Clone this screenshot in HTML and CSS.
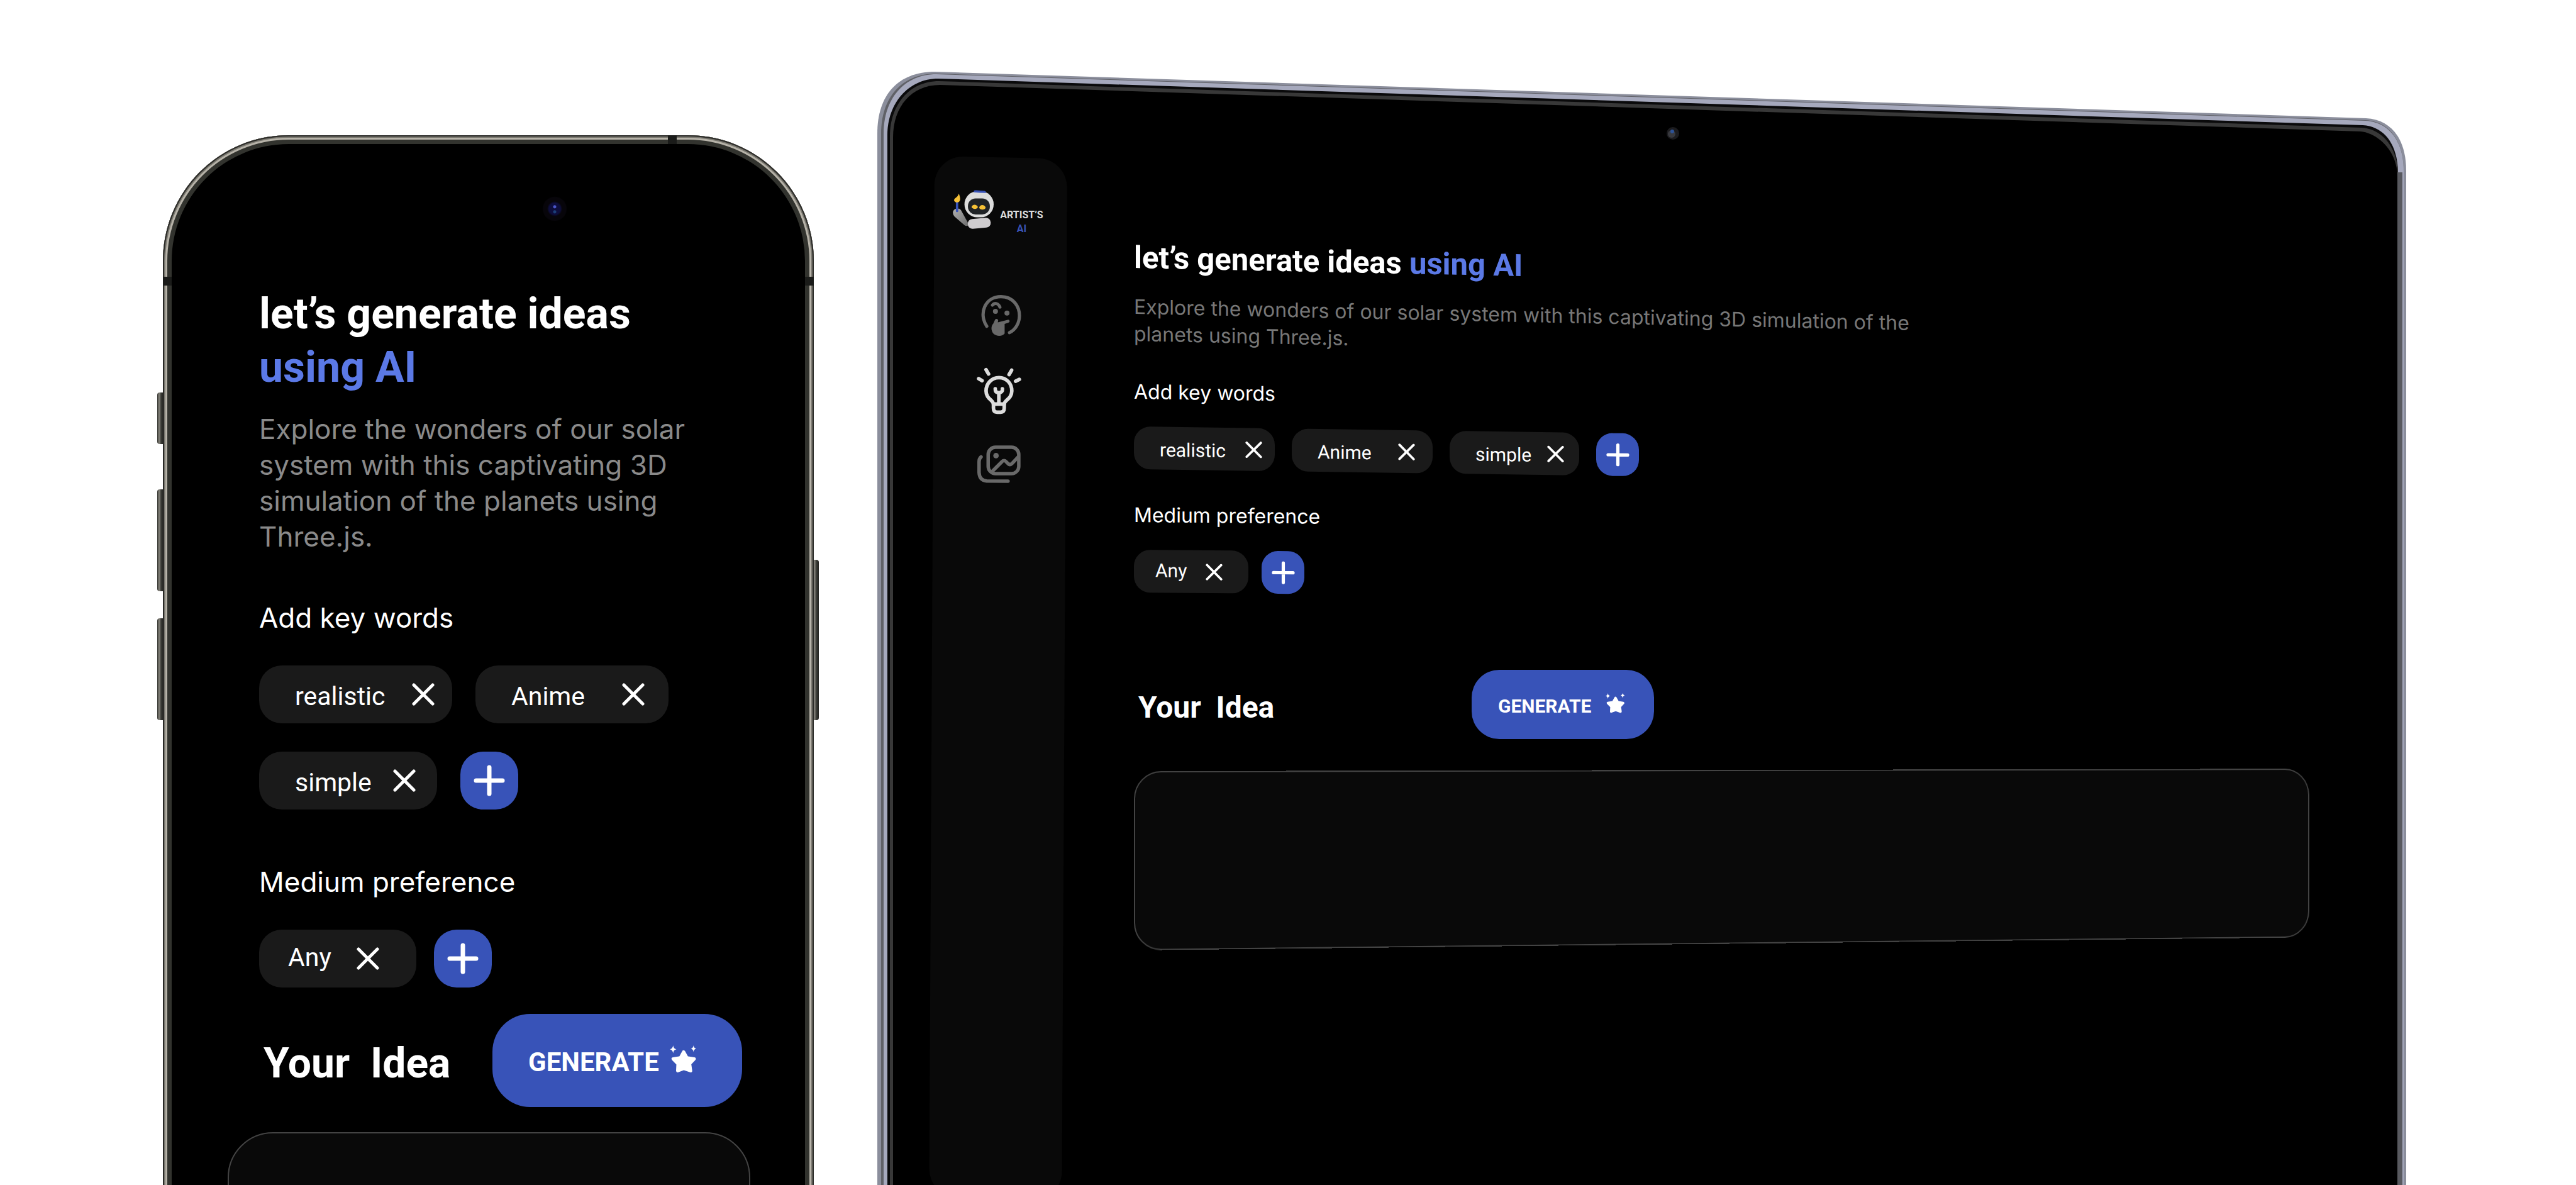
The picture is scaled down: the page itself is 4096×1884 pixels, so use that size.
FILE: index.html
```html
<!DOCTYPE html>
<html lang="en">
<head>
<meta charset="utf-8">
<meta name="viewport" content="width=device-width, initial-scale=1">
<title>Artist's AI – Generate ideas</title>
<link rel="stylesheet" href="styles.css">
</head>
<body>
<svg class="sprite" aria-hidden="true">
  <symbol id="cross" viewBox="0 0 36 36"><path d="M3 3 33 33M33 3 3 33" fill="none" stroke="#fff" stroke-width="5" stroke-linecap="round"/></symbol>
  <symbol id="plus" viewBox="0 0 50 50"><path d="M25 4V46M4 25H46" fill="none" stroke="#fff" stroke-width="7" stroke-linecap="round"/></symbol>
  <symbol id="stars" viewBox="0 0 42 42">
    <path d="M22 10 27 19 38 20.500 31 28 32.500 38.500 22.500 35 13 38.500 13.500 28 6 20.500 17 19Z" fill="#fff" stroke="#fff" stroke-width="5" stroke-linejoin="round"/>
    <path d="M6 0Q6.500 5 11 6Q6.500 7 6 12Q5.500 7 1 6Q5.500 5 6 0ZM37 0Q37.500 4 41 5Q37.500 6 37 10Q36.500 6 33 5Q36.500 4 37 0Z" fill="#fff"/>
  </symbol>
</svg>

<div class="stage">
  <section class="device phone" aria-label="Phone">
    <span class="key key-action"></span>
    <span class="key key-up"></span>
    <span class="key key-down"></span>
    <span class="key key-power"></span>
    <div class="phone-body">
      <span class="antenna antenna-left"></span>
      <span class="antenna antenna-right"></span>
      <span class="antenna antenna-top"></span>
      <span class="phone-camera"></span>
      <main class="content">
        <h1 class="title">let’s generate ideas <span class="accent">using AI</span></h1>
        <p class="lead">Explore the wonders of our solar system with this captivating 3D simulation of the planets using Three.js.</p>
        <h2 class="label label-words">Add key words</h2>
        <div class="chips chips-words">
          <span class="chip"><span class="chip-text">realistic</span><button class="remove" type="button" aria-label="Remove realistic"><svg><use href="#cross"/></svg></button></span>
          <span class="chip chip-anime"><span class="chip-text">Anime</span><button class="remove" type="button" aria-label="Remove Anime"><svg><use href="#cross"/></svg></button></span>
          <span class="chip chip-simple"><span class="chip-text">simple</span><button class="remove" type="button" aria-label="Remove simple"><svg><use href="#cross"/></svg></button></span>
          <button class="add" type="button" aria-label="Add key word"><svg><use href="#plus"/></svg></button>
        </div>
        <h2 class="label label-medium">Medium preference</h2>
        <div class="chips chips-medium">
          <span class="chip chip-any"><span class="chip-text">Any</span><button class="remove" type="button" aria-label="Remove Any"><svg><use href="#cross"/></svg></button></span>
          <button class="add" type="button" aria-label="Add medium"><svg><use href="#plus"/></svg></button>
        </div>
        <div class="idea-row">
          <label class="idea-label" for="phone-idea">Your&nbsp; Idea</label>
          <button class="generate" type="button">GENERATE<svg><use href="#stars"/></svg></button>
        </div>
        <textarea class="idea" id="phone-idea"></textarea>
      </main>
    </div>
  </section>

  <section class="device laptop" aria-label="Laptop">
    <svg class="laptop-frame" viewBox="0 0 2431 1770" preserveAspectRatio="none" aria-hidden="true">
      <path fill="#8b8e9c" d="M0 1770V98C0 38 32 0 92 0L2367 74C2408 76 2431 108 2431 158V1770Z"/>
      <path fill="#606167" d="M6 1770V98C6 42 38 3 94 3L2366 77C2404 79 2427 110 2427 158V1770Z"/>
      <path fill="#a6a9bd" d="M10 1770V98C10 44 42 4 94 4L2366 78C2404 80 2427 111 2427 158V1770Z"/>
      <path fill="#0a0a0b" d="M16 1770V100C16 52 48 11 97 11L2362 85C2397 87 2418 117 2418 162V1770Z"/>
      <path fill="#383838" d="M20 1770V102C20 54 50 15 98 15L2360 89C2393 91 2418 121 2418 164V1770Z"/>
      <path fill="#000" d="M25 1770V104C25 56 54 21 100 21L2358 95C2386 97 2417 127 2417 166V1770Z"/>
      <path fill="#58595f" d="M2417 160H2425V1770H2417Z"/>
      <circle cx="1265" cy="98" r="10" fill="#1b1b1e"/>
      <circle cx="1263" cy="99" r="6" fill="#38393e"/>
      <circle cx="1264" cy="95" r="3" fill="#2d5296"/>
    </svg>
    <nav class="sidebar" aria-label="Main">
      <a class="logo" href="#home" aria-label="Artist's AI">
        <svg class="robot" viewBox="96 92 236 222" aria-hidden="true">
          <defs><linearGradient id="arm" x1="0" y1="0" x2="1" y2="1"><stop offset="0" stop-color="#b0b0b0"/><stop offset="1" stop-color="#6d6d6d"/></linearGradient></defs>
          <path fill="url(#arm)" d="M100 218C99 195 132 185 145 204L188 282C186 292 172 293 165 287L108 238Q100 230 100 218Z"/>
          <path stroke="#3853b8" stroke-width="13" stroke-linecap="round" d="M123 160V208"/>
          <path fill="#f7c136" d="M133 113C144 140 143 160 123 161C102 160 103 142 116 135Q128 127 133 113Z"/>
          <rect x="182" y="249" width="127" height="54" rx="26" fill="#cfcccf" transform="rotate(-5 245 276)"/>
          <rect x="164" y="100" width="161" height="143" rx="70" fill="#dcdcdc"/>
          <path fill="#3853b8" d="M215 98Q218 93 228 94L276 97Q284 99 283 108Q250 108 215 105Z"/>
          <rect x="183" y="139" width="121" height="88" rx="42" fill="#202326"/>
          <path fill="#f7c136" d="M203 186C207 170 231 169 238 186C237 200 207 201 203 186ZM245 189C250 171 275 171 281 190C277 203 249 204 245 189Z"/>
        </svg>
        <span class="logo-text"><span>ARTIST’S</span><span class="logo-ai">AI</span></span>
      </a>
      <a class="nav-link" href="#think" aria-label="Think">
        <svg class="nav-face" viewBox="100 90 230 240" aria-hidden="true">
          <g fill="none" stroke="#696969" stroke-linecap="round">
            <path stroke-width="18" d="M135 270C88 200 125 106 214 106C280 106 316 158 316 212C316 254 292 290 261 305"/>
            <path stroke-width="17" d="M166 153C180 137 200 143 208 164"/>
          </g>
          <g fill="#696969"><circle cx="183" cy="187" r="14"/><circle cx="247" cy="197" r="14"/>
          <path d="M180 235C184 225 199 229 198 238L196 248L251 234C263 232 265 247 255 250L234 257V310C222 327 189 327 172 311C156 293 159 267 171 255Z"/></g>
        </svg>
      </a>
      <a class="nav-link nav-link-lower" href="#ideas" aria-label="Ideas" aria-current="page">
        <svg class="nav-bulb" viewBox="75 500 252 262" aria-hidden="true">
          <g fill="none" stroke="#dcdcdc" stroke-width="20" stroke-linecap="round" stroke-linejoin="round">
            <path d="M170 704C168 681 129 675 129 631C129 589 160 557 201 557C242 557 272 589 272 631C272 675 232 681 230 704Z"/>
            <path d="M170 706V726Q170 749 190 749H210Q230 749 230 726V706"/>
            <path d="M200 700V641M180 619Q179 640 200 641Q222 640 220 619"/>
            <path d="M129 513 143 537M88 563 107 574M271 516 257 540M314 567 293 577"/>
          </g>
        </svg>
      </a>
      <a class="nav-link nav-link-lower" href="#gallery" aria-label="Gallery">
        <svg class="nav-gallery" viewBox="80 932 245 214" aria-hidden="true">
          <g fill="none" stroke="#696969" stroke-width="19" stroke-linecap="round" stroke-linejoin="round">
            <rect x="143" y="946" width="168" height="145" rx="40"/>
            <path d="M166 1078 217 1027Q230 1012 243 1027L252 1036Q263 1046 274 1035L308 999"/>
            <path d="M104 999Q93 1009 93 1025V1085Q95 1127 134 1131L252 1132"/>
          </g>
          <circle cx="186" cy="992" r="15" fill="#696969"/>
        </svg>
      </a>
    </nav>
    <main class="content">
      <h1 class="title">let’s generate ideas <span class="accent">using AI</span></h1>
      <p class="lead">Explore the wonders of our solar system with this captivating 3D simulation of the planets using Three.js.</p>
      <h2 class="label label-words">Add key words</h2>
      <div class="chips chips-words">
        <span class="chip"><span class="chip-text">realistic</span><button class="remove" type="button" aria-label="Remove realistic"><svg><use href="#cross"/></svg></button></span>
        <span class="chip chip-anime"><span class="chip-text">Anime</span><button class="remove" type="button" aria-label="Remove Anime"><svg><use href="#cross"/></svg></button></span>
        <span class="chip chip-simple"><span class="chip-text">simple</span><button class="remove" type="button" aria-label="Remove simple"><svg><use href="#cross"/></svg></button></span>
        <button class="add" type="button" aria-label="Add key word"><svg><use href="#plus"/></svg></button>
      </div>
      <h2 class="label label-medium">Medium preference</h2>
      <div class="chips chips-medium">
        <span class="chip chip-any"><span class="chip-text">Any</span><button class="remove" type="button" aria-label="Remove Any"><svg><use href="#cross"/></svg></button></span>
        <button class="add" type="button" aria-label="Add medium"><svg><use href="#plus"/></svg></button>
      </div>
      <div class="idea-row">
        <label class="idea-label" for="laptop-idea">Your&nbsp; Idea</label>
        <button class="generate" type="button">GENERATE<svg><use href="#stars"/></svg></button>
      </div>
      <textarea class="idea" id="laptop-idea"></textarea>
    </main>
  </section>
</div>
</body>
</html>
```

FILE: styles.css
```css
* { box-sizing: border-box; }

body {
  margin: 0;
  background: #fff;
  color: #fff;
  font-family: Roboto, "Liberation Sans", sans-serif;
}

button {
  display: flex;
  align-items: center;
  padding: 0;
  border: 0;
  background: none;
  color: inherit;
  font: inherit;
  cursor: pointer;
}

.sprite { position: absolute; width: 0; height: 0; }

.stage {
  display: grid;
  grid-template-columns: 1035fr 2431fr;
  gap: 101px;
  height: 100vh;
  padding: 0 270px 0 259px;
  overflow: hidden;
}

.device { position: relative; }

/* Shared form pieces, sized by each device's variables */
.title {
  margin: 0;
  font-size: var(--title);
  line-height: var(--title-line);
  font-weight: 700;
}
.accent { color: #5b79e6; }

.lead {
  max-width: var(--lead-width);
  margin: var(--lead-gap) 0 0;
  color: var(--lead-color);
  font-family: Inter, sans-serif;
  font-size: var(--text);
  line-height: var(--text-line);
}

.label {
  margin: 0;
  font-family: Inter, sans-serif;
  font-size: var(--text);
  line-height: var(--label-line);
  font-weight: 400;
}
.label-words { margin-top: var(--words-gap); }
.label-medium { margin-top: var(--medium-gap); }

.chips {
  display: flex;
  flex-wrap: wrap;
  gap: 45px var(--chip-gap);
  margin-top: var(--chips-top);
}
.chips-medium { column-gap: var(--medium-chip-gap); }

.chip {
  display: flex;
  align-items: center;
  justify-content: space-between;
  min-width: var(--chip-width);
  height: var(--chip-height);
  padding: 0 var(--pad-end) 0 var(--pad-start);
  border-radius: var(--chip-radius);
  background: #1a1a1a;
  font-size: var(--chip-text);
}
.chip-text { padding-top: 5px; }
.chip-anime { padding-right: var(--anime-end); }
.chip-simple { min-width: var(--simple-width); padding-right: var(--simple-end); }
.chip-any { min-width: var(--any-width); padding: 0 var(--any-end) 0 var(--any-start); }
.chip-any .chip-text { padding: 0 0 4px; }
.remove svg { display: block; width: var(--cross); height: var(--cross); }

.add {
  justify-content: center;
  width: var(--chip-height);
  height: var(--chip-height);
  border-radius: var(--chip-radius);
  background: #3853b8;
}
.add svg { width: var(--plus); height: var(--plus); }

.idea-row {
  display: flex;
  align-items: center;
  margin-top: var(--row-gap);
}
.idea-label {
  flex: 0 0 var(--idea-width);
  padding: 8px 0 0 7px;
  font-size: var(--idea-text);
  font-weight: 700;
}
.generate {
  gap: var(--star-gap);
  width: var(--generate-width);
  height: var(--generate-height);
  padding: 4px 0 0 var(--generate-pad);
  border-radius: var(--generate-radius);
  background: #3853b8;
  font-size: var(--generate-text);
  font-weight: 700;
}
.generate svg { width: var(--star); height: var(--star); margin-bottom: 8px; }

.idea {
  display: block;
  margin: 0;
  border: 2px solid #434343;
  background: #090909;
  color: #fff;
  resize: none;
}

/* Phone */
.phone {
  --title: 68px;
  --title-line: 85px;
  --lead-width: 700px;
  --lead-gap: 27px;
  --lead-color: #8a8a8a;
  --text: 44px;
  --text-line: 57px;
  --label-line: 56px;
  --words-gap: 72px;
  --medium-gap: 87px;
  --chips-top: 48px;
  --chip-gap: 37px;
  --medium-chip-gap: 28px;
  --chip-width: 307px;
  --simple-width: 283px;
  --any-width: 250px;
  --chip-height: 92px;
  --chip-radius: 36px;
  --chip-text: 41px;
  --pad-start: 57px;
  --pad-end: 28px;
  --anime-end: 38px;
  --simple-end: 34px;
  --any-start: 46px;
  --any-end: 59px;
  --cross: 36px;
  --plus: 50px;
  --row-gap: 42px;
  --idea-width: 371px;
  --idea-text: 66px;
  --generate-width: 397px;
  --generate-height: 148px;
  --generate-radius: 60px;
  --generate-pad: 57px;
  --generate-text: 42px;
  --star-gap: 16px;
  --star: 44px;
  padding-top: 215px;
}
.phone-body {
  position: relative;
  height: 1800px;
  padding: 242px 101px 0 153px;
  border-radius: 200px 200px 0 0;
  background: #000;
  box-shadow:
    inset 0 0 0 2px #2b2b28,
    inset 0 0 0 4px #77756d,
    inset 0 0 0 7px #b7b3a9,
    inset 0 0 0 14px #32332e;
}
.phone .accent { display: block; }
.phone .idea {
  width: 831px;
  height: 500px;
  margin: 40px 0 0 -50px;
  border-radius: 72px;
}

.key {
  position: absolute;
  left: -9px;
  width: 10px;
  border-radius: 4px 0 0 4px;
  background: linear-gradient(90deg, #23231f, #8b8981 30%, #3b3c37 60%, #22221f);
}
.key-action { top: 624px; height: 82px; }
.key-up { top: 778px; height: 162px; }
.key-down { top: 983px; height: 162px; }
.key-power {
  top: 890px;
  right: -8px;
  left: auto;
  height: 255px;
  border-radius: 0 4px 4px 0;
}

.antenna { position: absolute; width: 14px; height: 14px; background: #1a1b19; }
.antenna-left { top: 225px; left: 0; }
.antenna-right { top: 225px; right: 0; }
.antenna-top { top: 0; right: 218px; }

.phone-camera {
  position: absolute;
  top: 97px;
  left: 603px;
  width: 40px;
  height: 40px;
  border-radius: 50%;
  background:
    radial-gradient(circle at 50% 42%, #4a55c8 0 2px, transparent 3px),
    radial-gradient(circle at 50% 62%, #1b3f78 0 2px, transparent 3px),
    radial-gradient(circle, #0d0d3c 0 9px, #07050a 12px 18px, transparent 20px);
}

/* Laptop */
.laptop {
  --title: 49px;
  --title-line: 62px;
  --lead-width: 1270px;
  --lead-gap: 25px;
  --lead-color: #777;
  --text: 32px;
  --text-line: 43px;
  --label-line: 44px;
  --words-gap: 49px;
  --medium-gap: 51px;
  --chips-top: 33px;
  --chip-gap: 27px;
  --medium-chip-gap: 21px;
  --chip-width: 224px;
  --simple-width: 206px;
  --any-width: 182px;
  --chip-height: 68px;
  --chip-radius: 26px;
  --chip-text: 30px;
  --pad-start: 41px;
  --pad-end: 20px;
  --anime-end: 28px;
  --simple-end: 24px;
  --any-start: 34px;
  --any-end: 41px;
  --cross: 27px;
  --plus: 37px;
  --row-gap: 123px;
  --idea-width: 537px;
  --idea-text: 48px;
  --generate-width: 290px;
  --generate-height: 110px;
  --generate-radius: 44px;
  --generate-pad: 42px;
  --generate-text: 30px;
  --star-gap: 22px;
  --star: 32px;
  display: flex;
  align-items: flex-start;
  gap: 106px;
  margin-top: 114px;
  padding: 134px 161px 0 91px;
}
.laptop-frame {
  position: absolute;
  top: 0;
  left: 0;
  width: 100%;
  height: 1770px;
}
.laptop .content { position: relative; flex: 1; padding-top: 131px; }

/* The screen is turned slightly away, so rows above the middle slope down */
.laptop .title,
.laptop .lead { transform: skewY(1.2deg); transform-origin: left top; }
.laptop .label-words,
.laptop .chips-words { transform: skewY(0.8deg); transform-origin: left top; }
.laptop .label-medium,
.laptop .chips-medium { transform: skewY(0.5deg); transform-origin: left top; }
.laptop .idea {
  width: 108%;
  height: 285px;
  margin-top: 51px;
  border-radius: 44px;
  transform: perspective(5000px) rotateY(9deg);
  transform-origin: left -65px;
}

.sidebar {
  position: relative;
  display: flex;
  flex: 0 0 211px;
  flex-direction: column;
  align-items: center;
  height: 1656px;
  padding-top: 54px;
}
.sidebar::before {
  content: "";
  position: absolute;
  inset: 0;
  border-radius: 46px;
  background: #090909;
  transform: skew(-0.3deg, 1.2deg);
  transform-origin: left top;
}
.logo {
  position: relative;
  display: flex;
  margin: 0 10px 44px 0;
  color: #dcdcdc;
  text-decoration: none;
}
.robot { width: 68px; height: 64px; }
.logo-text {
  display: flex;
  flex-direction: column;
  align-items: center;
  padding: 29px 0 0 8px;
  font-size: 16px;
  line-height: 22px;
  font-weight: 700;
}
.logo-ai { color: #3853b8; }
.nav-link { position: relative; margin-top: 48px; }
.nav-link-lower { margin-right: 7px; }
.nav-link svg { display: block; }
.nav-face { width: 66px; height: 69px; }
.nav-bulb { width: 73px; height: 75px; }
.nav-gallery { width: 71px; height: 62px; }
```
